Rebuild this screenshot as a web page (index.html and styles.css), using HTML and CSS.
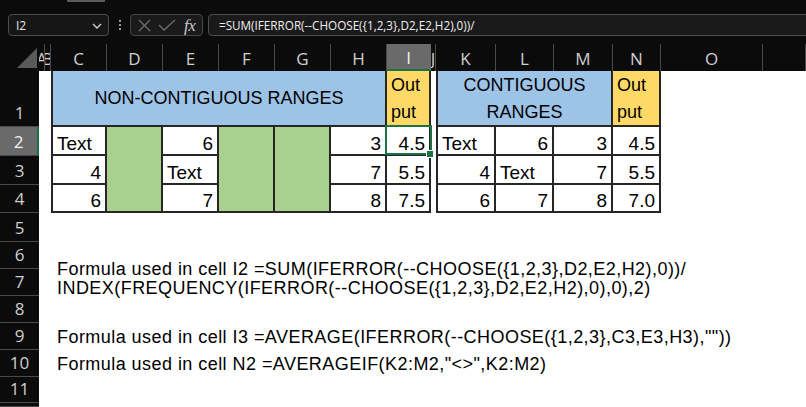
FILE: index.html
```html
<!DOCTYPE html>
<html lang="en">
<head>
<meta charset="utf-8">
<title>Excel - CHOOSE non-contiguous ranges</title>
<link rel="stylesheet" href="styles.css">
</head>
<body>
<div class="app">
  <div class="topbar">
    <div class="thumb"></div>
    <div class="fbar">
      <div class="namebox"><span>I2</span>
        <svg class="chev" width="10" height="6" viewBox="0 0 10 6"><polyline points="1,1 5,5 9,1" fill="none" stroke="#d6d6d6" stroke-width="1.3"/></svg>
      </div>
      <div class="dots"><i></i><i></i><i></i></div>
      <div class="btns">
        <svg width="13" height="13" viewBox="0 0 13 13"><path d="M1 1 L12 12 M12 1 L1 12" stroke="#6e6e6e" stroke-width="1.3" fill="none"/></svg>
        <svg width="18" height="13" viewBox="0 0 18 13"><polyline points="1,6 6,11 17,1" stroke="#6e6e6e" stroke-width="1.3" fill="none"/></svg>
        <span class="fx">fx</span>
      </div>
      <div class="finput">=SUM(IFERROR(--CHOOSE({1,2,3},D2,E2,H2),0))/</div>
    </div>
  </div>

  <div class="sheet">
    <div class="corner c1 r1"><svg width="39" height="27" viewBox="0 0 39 27"><polygon points="17,24 37,24 37,4" fill="#5a5a5a"/></svg></div>
    <div class="ch c2 r1">A</div>
    <div class="ch c3 r1">B</div>
    <div class="ch c4 r1">C</div>
    <div class="ch c5 r1">D</div>
    <div class="ch c6 r1">E</div>
    <div class="ch c7 r1">F</div>
    <div class="ch c8 r1">G</div>
    <div class="ch c9 r1">H</div>
    <div class="ch c10 r1 active-col">I</div>
    <div class="ch c11 r1">J</div>
    <div class="ch c12 r1">K</div>
    <div class="ch c13 r1">L</div>
    <div class="ch c14 r1">M</div>
    <div class="ch c15 r1">N</div>
    <div class="ch c16 r1">O</div>
    <div class="ch c17 r1"></div>

    <div class="rh c1 r2">1</div>
    <div class="rh c1 r3 active-row">2</div>
    <div class="rh c1 r4">3</div>
    <div class="rh c1 r5">4</div>
    <div class="rh c1 r6">5</div>
    <div class="rh c1 r7">6</div>
    <div class="rh c1 r8">7</div>
    <div class="rh c1 r9">8</div>
    <div class="rh c1 r10">9</div>
    <div class="rh c1 r11">10</div>
    <div class="rh c1 r12">11</div>
    <div class="rh c1 r13"></div>

    <!-- left table -->
    <div class="cell bd bl blue center c4 r2 w6">NON-CONTIGUOUS RANGES</div>
    <div class="cell bd yellow wrap c10 r2">Out<br>put</div>

    <div class="cell bd bl left c4 r3">Text</div>
    <div class="cell bd bl num c4 r4">4</div>
    <div class="cell bd bl num c4 r5">6</div>

    <div class="cell bd green c5 r3 h3"></div>

    <div class="cell bd num c6 r3">6</div>
    <div class="cell bd left c6 r4">Text</div>
    <div class="cell bd num c6 r5">7</div>

    <div class="cell bd green c7 r3 h3"></div>
    <div class="cell bd green c8 r3 h3"></div>

    <div class="cell bd num c9 r3">3</div>
    <div class="cell bd num c9 r4">7</div>
    <div class="cell bd num c9 r5">8</div>

    <div class="cell bd num c10 r3 sel">4.5</div>
    <div class="cell bd num c10 r4">5.5</div>
    <div class="cell bd num c10 r5">7.5</div>

    <!-- right table -->
    <div class="cell bd bl blue wrap c12 r2 w3">CONTIGUOUS<br>RANGES</div>
    <div class="cell bd yellow wrap c15 r2">Out<br>put</div>

    <div class="cell bd bl left c12 r3">Text</div>
    <div class="cell bd bl num c12 r4">4</div>
    <div class="cell bd bl num c12 r5">6</div>

    <div class="cell bd num c13 r3">6</div>
    <div class="cell bd left c13 r4">Text</div>
    <div class="cell bd num c13 r5">7</div>

    <div class="cell bd num c14 r3">3</div>
    <div class="cell bd num c14 r4">7</div>
    <div class="cell bd num c14 r5">8</div>

    <div class="cell bd num c15 r3">4.5</div>
    <div class="cell bd num c15 r4">5.5</div>
    <div class="cell bd num c15 r5">7.0</div>

    <!-- formulas -->
    <div class="note two c4 r7 wall h2">Formula used in cell I2 =SUM(IFERROR(--CHOOSE({1,2,3},D2,E2,H2),0))/<br>INDEX(FREQUENCY(IFERROR(--CHOOSE({1,2,3},D2,E2,H2),0),0),2)</div>
    <div class="note one c4 r10 wall">Formula used in cell I3 =AVERAGE(IFERROR(--CHOOSE({1,2,3},C3,E3,H3),""))</div>
    <div class="note one c4 r11 wall">Formula used in cell N2 =AVERAGEIF(K2:M2,"&lt;&gt;",K2:M2)</div>
  </div>
</div>
</body>
</html>
```

FILE: styles.css
```css
* { box-sizing: border-box; }
html, body { margin: 0; padding: 0; }
body {
  width: 806px;
  height: 407px;
  overflow: hidden;
  background: #0b0b0b;
  font-family: "Liberation Sans", Arial, sans-serif;
}
.app { width: 806px; height: 407px; display: flex; flex-direction: column; }

/* ---------- top bar ---------- */
.topbar { height: 44px; flex: none; background: #0b0b0b; }
.thumb { margin-left: 67px; width: 38px; height: 2px; background: #5c5c5c; }
.fbar {
  margin-top: 12px;
  height: 22px;
  display: flex;
  align-items: stretch;
  padding-left: 8px;
  margin-right: -12px;
}
.namebox {
  width: 101px;
  border: 1px solid #4d4d4d;
  border-radius: 4px;
  background: #161616;
  display: flex;
  align-items: center;
  justify-content: space-between;
  padding: 0 6px 0 7px;
  color: #e8e8e8;
  font-family: "Open Sans", "Noto Sans", sans-serif;
  font-size: 12px;
}
.chev { margin-top: 1px; }
.dots {
  width: 21px;
  display: flex;
  flex-direction: column;
  align-items: center;
  justify-content: center;
  gap: 2px;
}
.dots i { display: block; width: 2px; height: 2px; background: #9a9a9a; }
.btns {
  width: 73px;
  border: 1px solid #454545;
  border-radius: 4px;
  background: #1a1a1a;
  display: flex;
  align-items: center;
  gap: 7px;
  padding-left: 7px;
}
.fx {
  font-family: "Liberation Serif", "DejaVu Serif", serif;
  font-style: italic;
  font-size: 17px;
  color: #c9c9c9;
  margin-left: 1px;
  letter-spacing: -0.5px;
  line-height: 1;
}
.finput {
  flex: 1;
  margin-left: 5px;
  border: 1px solid #4d4d4d;
  border-radius: 4px;
  background: #1a1a1a;
  color: #f0f0f0;
  font-family: "Open Sans", "Noto Sans", sans-serif;
  font-size: 11.7px;
  display: flex;
  align-items: center;
  padding-left: 10px;
  white-space: nowrap;
}

/* ---------- sheet grid ---------- */
.sheet {
  flex: 1;
  display: grid;
  grid-template-columns: 39px 6px 6px 56px 56px 56px 56px 56px 56px 44px 5px 60px 58px 59px 48px 102px 43px;
  grid-template-rows: 27px 56px 29px 29px 28px 29px 27px 27px 27px 27px 27px 26px 1fr;
  background: #ffffff;
  overflow: hidden;
}

.c1 { grid-column-start: 1; }  .c2 { grid-column-start: 2; }  .c3 { grid-column-start: 3; }
.c4 { grid-column-start: 4; }  .c5 { grid-column-start: 5; }  .c6 { grid-column-start: 6; }
.c7 { grid-column-start: 7; }  .c8 { grid-column-start: 8; }  .c9 { grid-column-start: 9; }
.c10 { grid-column-start: 10; } .c11 { grid-column-start: 11; } .c12 { grid-column-start: 12; }
.c13 { grid-column-start: 13; } .c14 { grid-column-start: 14; } .c15 { grid-column-start: 15; }
.c16 { grid-column-start: 16; } .c17 { grid-column-start: 17; }
.r1 { grid-row-start: 1; }  .r2 { grid-row-start: 2; }  .r3 { grid-row-start: 3; }
.r4 { grid-row-start: 4; }  .r5 { grid-row-start: 5; }  .r6 { grid-row-start: 6; }
.r7 { grid-row-start: 7; }  .r8 { grid-row-start: 8; }  .r9 { grid-row-start: 9; }
.r10 { grid-row-start: 10; } .r11 { grid-row-start: 11; } .r12 { grid-row-start: 12; }
.r13 { grid-row-start: 13; }
.w3 { grid-column-end: span 3; }
.w6 { grid-column-end: span 6; }
.wall { grid-column-end: -1; }
.h2 { grid-row-end: span 2; }
.h3 { grid-row-end: span 3; }

/* headers */
.corner { background: #0b0b0b; }
.corner svg { display: block; }
.ch {
  background: #0b0b0b;
  color: #cfcfcf;
  font-family: "Open Sans", "Noto Sans", sans-serif;
  font-size: 17px;
  display: flex;
  align-items: center;
  justify-content: center;
  overflow: hidden;
  border-right: 1px solid #4a4a4a;
  padding-top: 1px;
}
.active-col {
  background: #6a6a6a;
  color: #f2f2f2;
  border-bottom: 2px solid #1e7145;
  border-right-color: #6a6a6a;
}
.rh {
  background: #0b0b0b;
  color: #cfcfcf;
  font-family: "Open Sans", "Noto Sans", sans-serif;
  font-size: 17px;
  line-height: 20px;
  display: flex;
  align-items: flex-end;
  justify-content: center;
  padding-bottom: 3px;
  border-bottom: 1px solid #4a4a4a;
}
.active-row {
  background: #6a6a6a;
  color: #f2f2f2;
  border-right: 2px solid #1e7145;
}

/* cells */
.cell {
  color: #000;
  font-size: 19px;
  line-height: 20px;
  display: flex;
  align-items: flex-end;
  padding: 0 4px 0 4px;
  white-space: nowrap;
}
.bd { border-right: 2px solid #262626; border-bottom: 2px solid #262626; }
.bl { border-left: 2px solid #262626; }
.num { justify-content: flex-end; }
.left { justify-content: flex-start; }
.center { justify-content: center; align-items: center; font-size: 18px; }
.wrap {
  font-size: 18px;
  line-height: 27px;
  align-items: center;
  padding-top: 1px;
}
.blue { background: #9dc3e6; }
.blue.wrap { justify-content: center; text-align: center; }
.yellow { background: #ffd966; }
.green { background: #a9d08e; }

.sel { position: relative; z-index: 2; }
.sel::after {
  content: "";
  position: absolute;
  left: -2px;
  top: -2px;
  right: -3px;
  bottom: -1px;
  border: 2px solid #1e7145;
}
.sel::before {
  content: "";
  position: absolute;
  right: -5px;
  bottom: -4px;
  width: 6px;
  height: 6px;
  background: #1e7145;
  border: 1px solid #ffffff;
  z-index: 3;
}

/* formula notes */
.note {
  color: #000;
  font-size: 18px;
  letter-spacing: 0.45px;
  white-space: nowrap;
  padding-left: 6px;
}
.note.two { line-height: 19px; padding-top: 18px; }
.note.one { line-height: 20px; display: flex; align-items: flex-end; padding-bottom: 3px; }
```
